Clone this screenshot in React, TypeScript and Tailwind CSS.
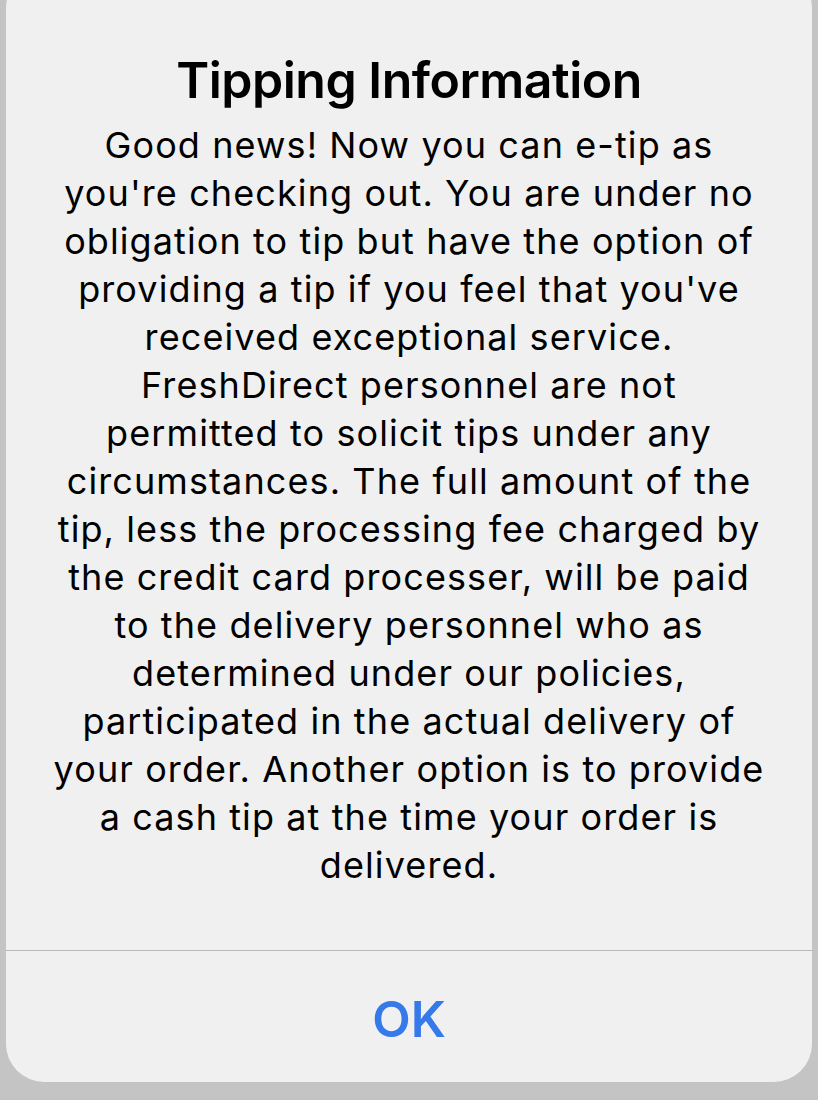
const bodyLines = [
  'Good news! Now you can e-tip as',
  "you're checking out. You are under no",
  'obligation to tip but have the option of',
  "providing a tip if you feel that you've",
  'received exceptional service.',
  'FreshDirect personnel are not',
  'permitted to solicit tips under any',
  'circumstances. The full amount of the',
  'tip, less the processing fee charged by',
  'the credit card processer, will be paid',
  'to the delivery personnel who as',
  'determined under our policies,',
  'participated in the actual delivery of',
  'your order. Another option is to provide',
  'a cash tip at the time your order is',
  'delivered.',
]

const App = () => {
  return (
    <div
      className="h-[1100px] w-full overflow-hidden bg-[#c4c4c4] px-[6px]"
      style={{ fontFamily: 'Inter, "Noto Sans", sans-serif' }}
    >
      <div className="-mt-[30px] flex h-[1112px] flex-col rounded-[38px] bg-[#f0f0f0]">
        <div className="flex flex-col items-center px-2 pt-[80px] pb-[61px] text-center text-black">
          <h1 className="text-[50px] leading-[60px] font-semibold tracking-[-0.5px]">Tipping Information</h1>
          <p className="mt-[11px] text-[36px] leading-[48px] tracking-[1.1px]">
            {bodyLines.map((line, idx) => (
              <span key={idx}>
                {line}
                <br />
              </span>
            ))}
          </p>
        </div>
        <div className="h-px bg-[#b8b8b8]" />
        <button className="flex flex-1 items-center justify-center pt-[6px] text-[50px] font-semibold text-[#3679ea]">
          OK
        </button>
      </div>
    </div>
  )
}

export default App
